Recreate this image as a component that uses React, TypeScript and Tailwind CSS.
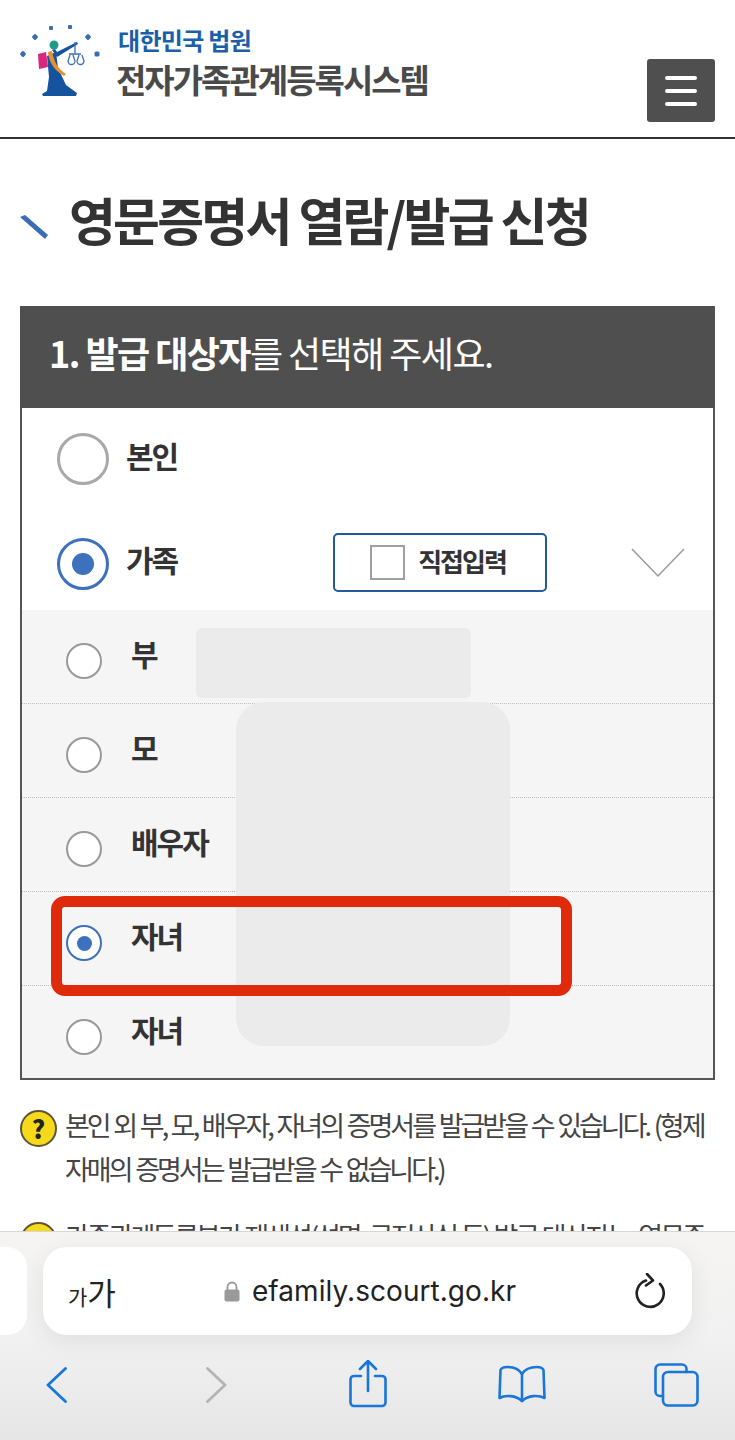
const FONT = "font-['Noto_Sans_CJK_KR','Noto_Sans',sans-serif]";

const familyRows = [
  { label: "부", checked: false },
  { label: "모", checked: false },
  { label: "배우자", checked: false },
  { label: "자녀", checked: true },
  { label: "자녀", checked: false },
];

// viewBox uses page coordinates, handy for tracing the emblem
function Logo() {
  return (
    <svg width="84" height="80" viewBox="17 18 84 80" className="shrink-0">
      <g fill="#3a6db5">
        <rect x="20.500" y="51.500" width="5" height="5" rx="1.5" transform="rotate(45 23 54)" />
        <rect x="32.500" y="34.500" width="5" height="5" rx="1.5" transform="rotate(45 35 37)" />
        <rect x="49" y="26" width="4" height="4" rx="1" />
        <rect x="68" y="25" width="4" height="4" rx="1" />
        <rect x="85.500" y="34.500" width="5" height="5" rx="1.5" transform="rotate(45 88 37)" />
        <rect x="94.500" y="51.500" width="5" height="5" rx="1.5" />
      </g>
      <path d="M38 54l8-2 2 15-9 2z" fill="#d6267f" />
      <circle cx="54" cy="45" r="4.5" fill="#1d9a8a" />
      <path d="M52 50l3-1 2 3 20-10 1 2-21 13z" fill="#15539f" />
      <path d="M47 56l9-4 2 16 8 17 11 8-1 3H43l-1-2 5-3 2-14z" fill="#15539f" />
      <path d="M48 52c1 10 6 18 16 24l2-2c-8-5-12-12-14-23z" fill="#e8912c" />
      <g fill="none" stroke="#3a6db5" strokeWidth="1.3">
        <path d="M75 42v11M69 54h12M70 55l-2 6a3.500 3.500 0 0 0 7 0l-2-6M79 55l-2 6a3.500 3.500 0 0 0 7 0l-2-6" />
      </g>
    </svg>
  );
}

function Radio({ large, checked }: { large?: boolean; checked?: boolean }) {
  if (large) {
    return (
      <span
        className={`flex h-[52px] w-[52px] shrink-0 items-center justify-center rounded-full border-[3px] bg-white ${
          checked ? "border-[#3d70bd]" : "border-[#a9a9a9]"
        }`}
      >
        {checked && <span className="h-[22px] w-[22px] rounded-full bg-[#3d70bd]" />}
      </span>
    );
  }
  return (
    <span
      className={`flex h-9 w-9 shrink-0 items-center justify-center rounded-full border-2 bg-white ${
        checked ? "border-[#3d70bd]" : "border-[#999]"
      }`}
    >
      {checked && <span className="h-[15px] w-[15px] rounded-full bg-[#3d70bd]" />}
    </span>
  );
}

function HelpIcon({ className = "" }: { className?: string }) {
  return (
    <span
      className={`flex h-[37px] w-[37px] shrink-0 items-center justify-center rounded-full border-2 border-[#5d5535] bg-[#f7d91c] text-[25px] font-black leading-none text-[#222] ${className}`}
    >
      ?
    </span>
  );
}

function FamilyRow({ label, checked, last }: { label: string; checked: boolean; last: boolean }) {
  return (
    <div
      className={`flex items-start pl-[44px] pt-[33px] ${
        last ? "h-[92px]" : "h-[94px] border-b border-dotted border-[#bdbdbd]"
      }`}
    >
      <Radio checked={checked} />
      <span className="ml-[29px] -mt-[12px] text-[30px] font-bold leading-[44px] tracking-[-2px] text-[#333]">
        {label}
      </span>
    </div>
  );
}

export default function App() {
  return (
    <div className={`relative h-[1440px] w-[735px] overflow-hidden bg-white ${FONT}`}>
      {/* site header */}
      <header className="flex h-[139px] items-start border-b-2 border-[#333] pl-[17px] pr-5 pt-[18px]">
        <Logo />
        <div className="ml-[15px] pt-[8px]">
          <div className="pl-[2px] text-[24px] font-bold leading-[28px] tracking-[-0.7px] text-[#1c5fa8]">대한민국 법원</div>
          <div className="mt-[5px] text-[33px] font-bold leading-[40px] tracking-[-2px] text-[#4a4a4a]">
            전자가족관계등록시스템
          </div>
        </div>
        <button className="ml-auto mt-[41px] flex h-[63px] w-[68px] flex-col items-center justify-center gap-[9px] rounded-[3px] bg-[#4f4f4f]">
          <span className="h-1 w-8 rounded-sm bg-white" />
          <span className="h-1 w-8 rounded-sm bg-white" />
          <span className="h-1 w-8 rounded-sm bg-white" />
        </button>
      </header>

      {/* page title */}
      <div className="flex h-[167px] items-start pl-5 pt-[44px]">
        <svg width="28" height="24" viewBox="0 0 28 24" className="mt-[32px] shrink-0">
          <path d="M0 2L5 0L28 20L25 24Z" fill="#3a6db5" />
        </svg>
        <h1 className="ml-[21px] text-[51px] font-bold leading-[72px] tracking-[-2.8px] text-[#333]">
          영문증명서 열람/발급 신청
        </h1>
      </div>

      {/* step panel */}
      <section className="mx-5 h-[774px] border-2 border-t-0 border-[#555]">
        <div className="-mx-0.5 flex h-[102px] items-start bg-[#4f4f4f] pl-[29px] pt-[20px] text-[36px] leading-[52px] tracking-[-1.55px] text-white">
          <b className="font-bold">1. 발급 대상자</b>
          <span className="font-normal">를 선택해 주세요.</span>
        </div>

        <div className="flex h-[104px] items-start pl-[35px] pt-[25px]">
          <Radio large />
          <span className="ml-[17px] -mt-px text-[30px] font-bold leading-[46px] tracking-[-2px] text-[#333]">본인</span>
        </div>

        <div className="flex h-[98px] items-start pl-[35px] pt-[26px]">
          <Radio large checked />
          <span className="ml-[17px] -mt-[2px] text-[30px] font-bold leading-[46px] tracking-[-2px] text-[#333]">가족</span>
          <button className="ml-[156px] -mt-[5px] flex h-[59px] w-[214px] items-center rounded-[5px] border-2 border-[#24599c] pl-[35px]">
            <span className="h-[35px] w-[35px] border-2 border-[#a0a0a0]" />
            <span className="ml-[13px] -mt-[4px] text-[26px] font-bold tracking-[-2px] text-[#333]">직접입력</span>
          </button>
          <svg width="54" height="30" viewBox="0 0 54 30" className="ml-[84px] mt-[10px] shrink-0">
            <path d="M1 1L27 28L53 1" fill="none" stroke="#9a9a9a" strokeWidth="1.5" />
          </svg>
        </div>

        <div className="bg-[#f5f5f5]">
          {familyRows.map((row, i) => (
            <FamilyRow key={i} label={row.label} checked={row.checked} last={i === familyRows.length - 1} />
          ))}
        </div>
      </section>

      {/* notes */}
      <div className="mx-5 mt-[28px] flex items-start">
        <HelpIcon className="mt-[2px]" />
        <p className="ml-[8px] -mt-[5px] whitespace-nowrap text-[27px] font-normal leading-[44px] tracking-[-3px] text-[#444] [word-spacing:1.6px]">
          본인 외 부, 모, 배우자, 자녀의 증명서를 발급받을 수 있습니다. (형제
          <br />
          자매의 증명서는 발급받을 수 없습니다.)
        </p>
      </div>
      <div className="mx-5 mt-[31px] flex items-start">
        <HelpIcon />
        <p className="ml-[8px] -mt-[8px] whitespace-nowrap text-[27px] font-normal leading-[44px] tracking-[-3px] text-[#444] [word-spacing:1.6px]">
          가족관계등록부가 재생성(성명, 국적상실 등) 발급 대상자는, 영문증
        </p>
      </div>

      {/* redacted blocks and highlight laid over the form */}
      <div className="absolute left-[196px] top-[628px] h-[70px] w-[275px] rounded-md bg-[#ebebeb]" />
      <div className="absolute left-[236px] top-[702px] h-[344px] w-[274px] rounded-[28px] bg-[#ebebeb]" />
      <div className="absolute left-[51px] top-[896px] h-[100px] w-[521px] rounded-[14px] border-[11px] border-[#e02a0c]" />

      {/* safari toolbar */}
      <div className="absolute inset-x-0 bottom-0 h-[209px] border-t border-[#d6d6d6] bg-gradient-to-b from-[#f5f4f2] via-[#f1f1f1] to-[#e6e6e6]">
        <div className="absolute -left-6 top-[15px] h-[88px] w-[51px] rounded-[20px] bg-white" />
        <div className="absolute left-[43px] top-[15px] flex h-[88px] w-[649px] items-center rounded-[24px] bg-white pl-[25px] pr-[27px] shadow-[0_6px_24px_rgba(0,0,0,0.08)]">
          <span className="flex w-[48px] items-baseline whitespace-nowrap text-[#222]">
            <span className="text-[21px] leading-none">가</span>
            <span className="text-[31px] leading-none">가</span>
          </span>
          <svg width="16" height="21" viewBox="0 0 16 21" className="ml-[108px] shrink-0">
            <path d="M3.500 9V6a4.500 4.500 0 0 1 9 0v3" fill="none" stroke="#9a9a9a" strokeWidth="1.8" />
            <rect x="0.500" y="8.500" width="15" height="12" rx="2" fill="#9a9a9a" />
          </svg>
          <span className="ml-[12px] whitespace-nowrap font-['Inter',sans-serif] text-[28px] leading-none tracking-[0.05px] text-[#222]">
            efamily.scourt.go.kr
          </span>
          <svg width="30" height="36" viewBox="0 0 30 36" className="ml-auto shrink-0 text-[#222]" fill="none" stroke="currentColor" strokeWidth="2.6" strokeLinecap="round" strokeLinejoin="round">
            <path d="M11 7.500A13.500 13.500 0 1 0 25 11" />
            <path d="M12 1l6 6.500-7 5" />
          </svg>
        </div>
        <div className="absolute left-[46px] top-[135px] flex items-start">
          <svg width="21" height="36" viewBox="0 0 21 36" fill="none" stroke="#1a76d8" strokeWidth="2.8" strokeLinecap="round" strokeLinejoin="round" className="shrink-0">
            <path d="M19.500 1.500L2 18l17.500 16.500" />
          </svg>
          <svg width="21" height="36" viewBox="0 0 21 36" fill="none" stroke="#b4b4b4" strokeWidth="2.8" strokeLinecap="round" strokeLinejoin="round" className="ml-[139px] shrink-0">
            <path d="M1.500 1.500L19 18 1.500 34.500" />
          </svg>
          <svg width="38" height="48" viewBox="0 0 38 48" fill="none" stroke="#1a76d8" strokeWidth="2.6" strokeLinecap="round" strokeLinejoin="round" className="ml-[122px] -mt-[7px] shrink-0">
            <path d="M19 31V2M11 9l8-8 8 8" />
            <path d="M12 16H5a3.500 3.500 0 0 0-3.500 3.500v23A3.500 3.500 0 0 0 5 46h28a3.500 3.500 0 0 0 3.500-3.500v-23A3.500 3.500 0 0 0 33 16h-7" />
          </svg>
          <svg width="48" height="38" viewBox="0 0 48 38" fill="none" stroke="#1a76d8" strokeWidth="2.6" strokeLinecap="round" strokeLinejoin="round" className="ml-[111px] -mt-[2px] shrink-0">
            <path d="M24 9C21 4 15 2 9 2 6 2 3.500 3 2.500 5L1.500 33C7 30 18 30 24 36 30 30 41 30 46.500 33L45.500 5C44.500 3 42 2 39 2 33 2 27 4 24 9Z" />
            <path d="M24 9V36" />
          </svg>
          <svg width="45" height="44" viewBox="0 0 45 44" fill="none" stroke="#1a76d8" strokeWidth="2.6" strokeLinecap="round" strokeLinejoin="round" className="ml-[108px] -mt-[4px] shrink-0">
            <rect x="9" y="9" width="34.500" height="33.500" rx="5" />
            <path d="M9 33H6a4.500 4.500 0 0 1-4.500-4.500V6A4.500 4.500 0 0 1 6 1.500h22A4.500 4.500 0 0 1 32.500 6v3" />
          </svg>
        </div>
      </div>
    </div>
  );
}
